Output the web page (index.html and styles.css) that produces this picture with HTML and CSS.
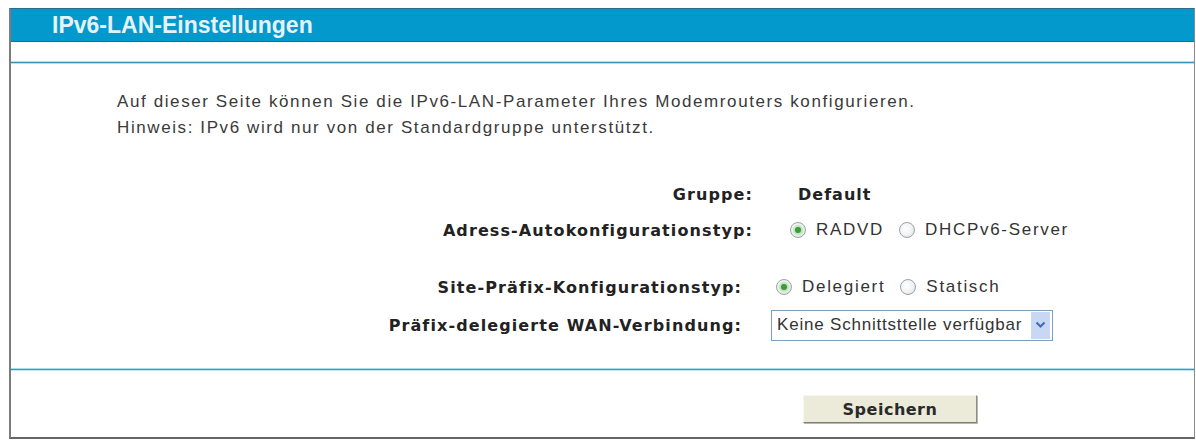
FILE: index.html
```html
<!DOCTYPE html>
<html lang="de">
<head>
<meta charset="utf-8">
<title>IPv6-LAN-Einstellungen</title>
<link rel="stylesheet" href="styles.css">
</head>
<body>
<div class="panel">
  <div class="header"><h1 class="title">IPv6-LAN-Einstellungen</h1></div>
  <div class="gap"></div>
  <div class="rule"></div>
  <div class="intro">
    <p>Auf dieser Seite können Sie die IPv6-LAN-Parameter Ihres Modemrouters konfigurieren.</p>
    <p>Hinweis: IPv6 wird nur von der Standardgruppe unterstützt.</p>
  </div>
  <div class="form form-a">
    <div class="label">Gruppe:</div>
    <div class="value"><span class="group">Default</span></div>
    <div class="label">Adress-Autokonfigurationstyp:</div>
    <div class="value">
      <span class="radio checked"></span><span class="opt">RADVD</span>
      <span class="radio"></span><span class="opt">DHCPv6-Server</span>
    </div>
  </div>
  <div class="form form-b">
    <div class="label">Site-Präfix-Konfigurationstyp:</div>
    <div class="value">
      <span class="radio checked"></span><span class="opt">Delegiert</span>
      <span class="radio"></span><span class="opt">Statisch</span>
    </div>
    <div class="label">Präfix-delegierte WAN-Verbindung:</div>
    <div class="value">
      <div class="select">
        <span class="select-text">Keine Schnittsttelle verfügbar</span>
        <span class="select-btn"><svg width="11" height="8" viewBox="0 0 11 8"><path d="M1.5 1.5 L5.5 5.5 L9.5 1.5" fill="none" stroke="#4a6cb3" stroke-width="2.2"/></svg></span>
      </div>
    </div>
  </div>
  <div class="rule rule-b"></div>
  <div class="actions"><button class="save" type="button">Speichern</button></div>
</div>
</body>
</html>
```
FILE: styles.css
```css
html, body {
  margin: 0;
  padding: 0;
  background: #fff;
}
.panel {
  margin: 8px 0 0 9px;
  width: 1183px;
  border-top: 1px solid #2a6e8c;
  border-left: 2px solid #7c7c7c;
  border-right: 1px solid #8a8a8a;
  border-bottom: 2px solid #666;
  font-family: "Liberation Sans", Arial, sans-serif;
}
.header {
  height: 32px;
  background: #0399cc;
  border-bottom: 1px solid #1f6f8e;
  display: flex;
  align-items: center;
}
.title {
  margin: 0 0 0 41px;
  font-size: 23px;
  font-weight: bold;
  color: #e4f3fa;
  letter-spacing: 0;
}
.gap {
  height: 19px;
}
.rule {
  height: 1px;
  background: #3a93b5;
  border-top: 1px solid #b2e0f0;
  border-bottom: 1px solid #b2e0f0;
}
.intro {
  margin-top: 25px;
  padding-left: 106px;
  color: #3a3a3a;
  font-size: 17px;
  letter-spacing: 1.6px;
}
.intro p {
  margin: 0;
  line-height: 26px;
  white-space: nowrap;
}
.form {
  display: grid;
  font-family: "DejaVu Sans", Verdana, sans-serif;
  font-size: 16px;
  color: #222;
}
.form-a {
  margin-top: 35px;
  grid-template-columns: 742px auto;
  grid-auto-rows: 36px;
  column-gap: 37px;
}
.form-b {
  margin-top: 20px;
  grid-template-columns: 731px auto;
  grid-auto-rows: 38px;
  column-gap: 29px;
}
.label {
  font-weight: bold;
  letter-spacing: 1.1px;
  display: flex;
  align-items: center;
  justify-content: flex-end;
  white-space: nowrap;
}
.value {
  display: flex;
  align-items: center;
}
.group {
  font-weight: bold;
  letter-spacing: 1px;
  margin-left: 8px;
}
.radio {
  width: 14px;
  height: 14px;
  border-radius: 50%;
  border: 1px solid #98a3ad;
  background: radial-gradient(circle at 40% 40%, #ffffff 0%, #f3f3f3 50%, #d4d8dc 100%);
  position: relative;
  flex: none;
}
.radio.checked::after {
  content: "";
  position: absolute;
  left: 4px;
  top: 4px;
  width: 6px;
  height: 6px;
  border-radius: 50%;
  background: #3c9a3c;
  box-shadow: 0 0 2px 2px #b4e2ae;
}
.form-b .radio:first-child { margin-left: 5px; }
.opt {
  font-family: "Liberation Sans", Arial, sans-serif;
  font-size: 17px;
  color: #333;
  letter-spacing: 1.7px;
  margin: 0 15px 0 10px;
}
.select {
  width: 280px;
  height: 29px;
  border: 1px solid #7f9db9;
  display: flex;
  align-items: center;
  background: #fff;
}
.select-text {
  flex: 1;
  padding-left: 5px;
  font-family: "Liberation Sans", Arial, sans-serif;
  font-size: 17px;
  color: #333;
  letter-spacing: 0.8px;
  white-space: nowrap;
  overflow: hidden;
}
.select-btn {
  width: 19px;
  height: 27px;
  margin-right: 2px;
  background: #c8d7f4;
  display: flex;
  align-items: center;
  justify-content: center;
  flex: none;
}
.rule-b {
  margin-top: 24px;
  background: #3a9aae;
  border-top-color: #a9dde8;
  border-bottom-color: #c4e8ef;
}
.actions {
  padding: 24px 0 14px 792px;
}
.save {
  width: 174px;
  height: 28px;
  background: #ecead9;
  border: 1px solid;
  border-color: #f6f5ee #8b8b80 #7d7d72 #f6f5ee;
  box-shadow: 1px 1px 0 #b9b9ad;
  font-family: "DejaVu Sans", Verdana, sans-serif;
  font-weight: bold;
  font-size: 16px;
  letter-spacing: 0.5px;
  color: #2a2a2a;
  padding: 0;
}
```
